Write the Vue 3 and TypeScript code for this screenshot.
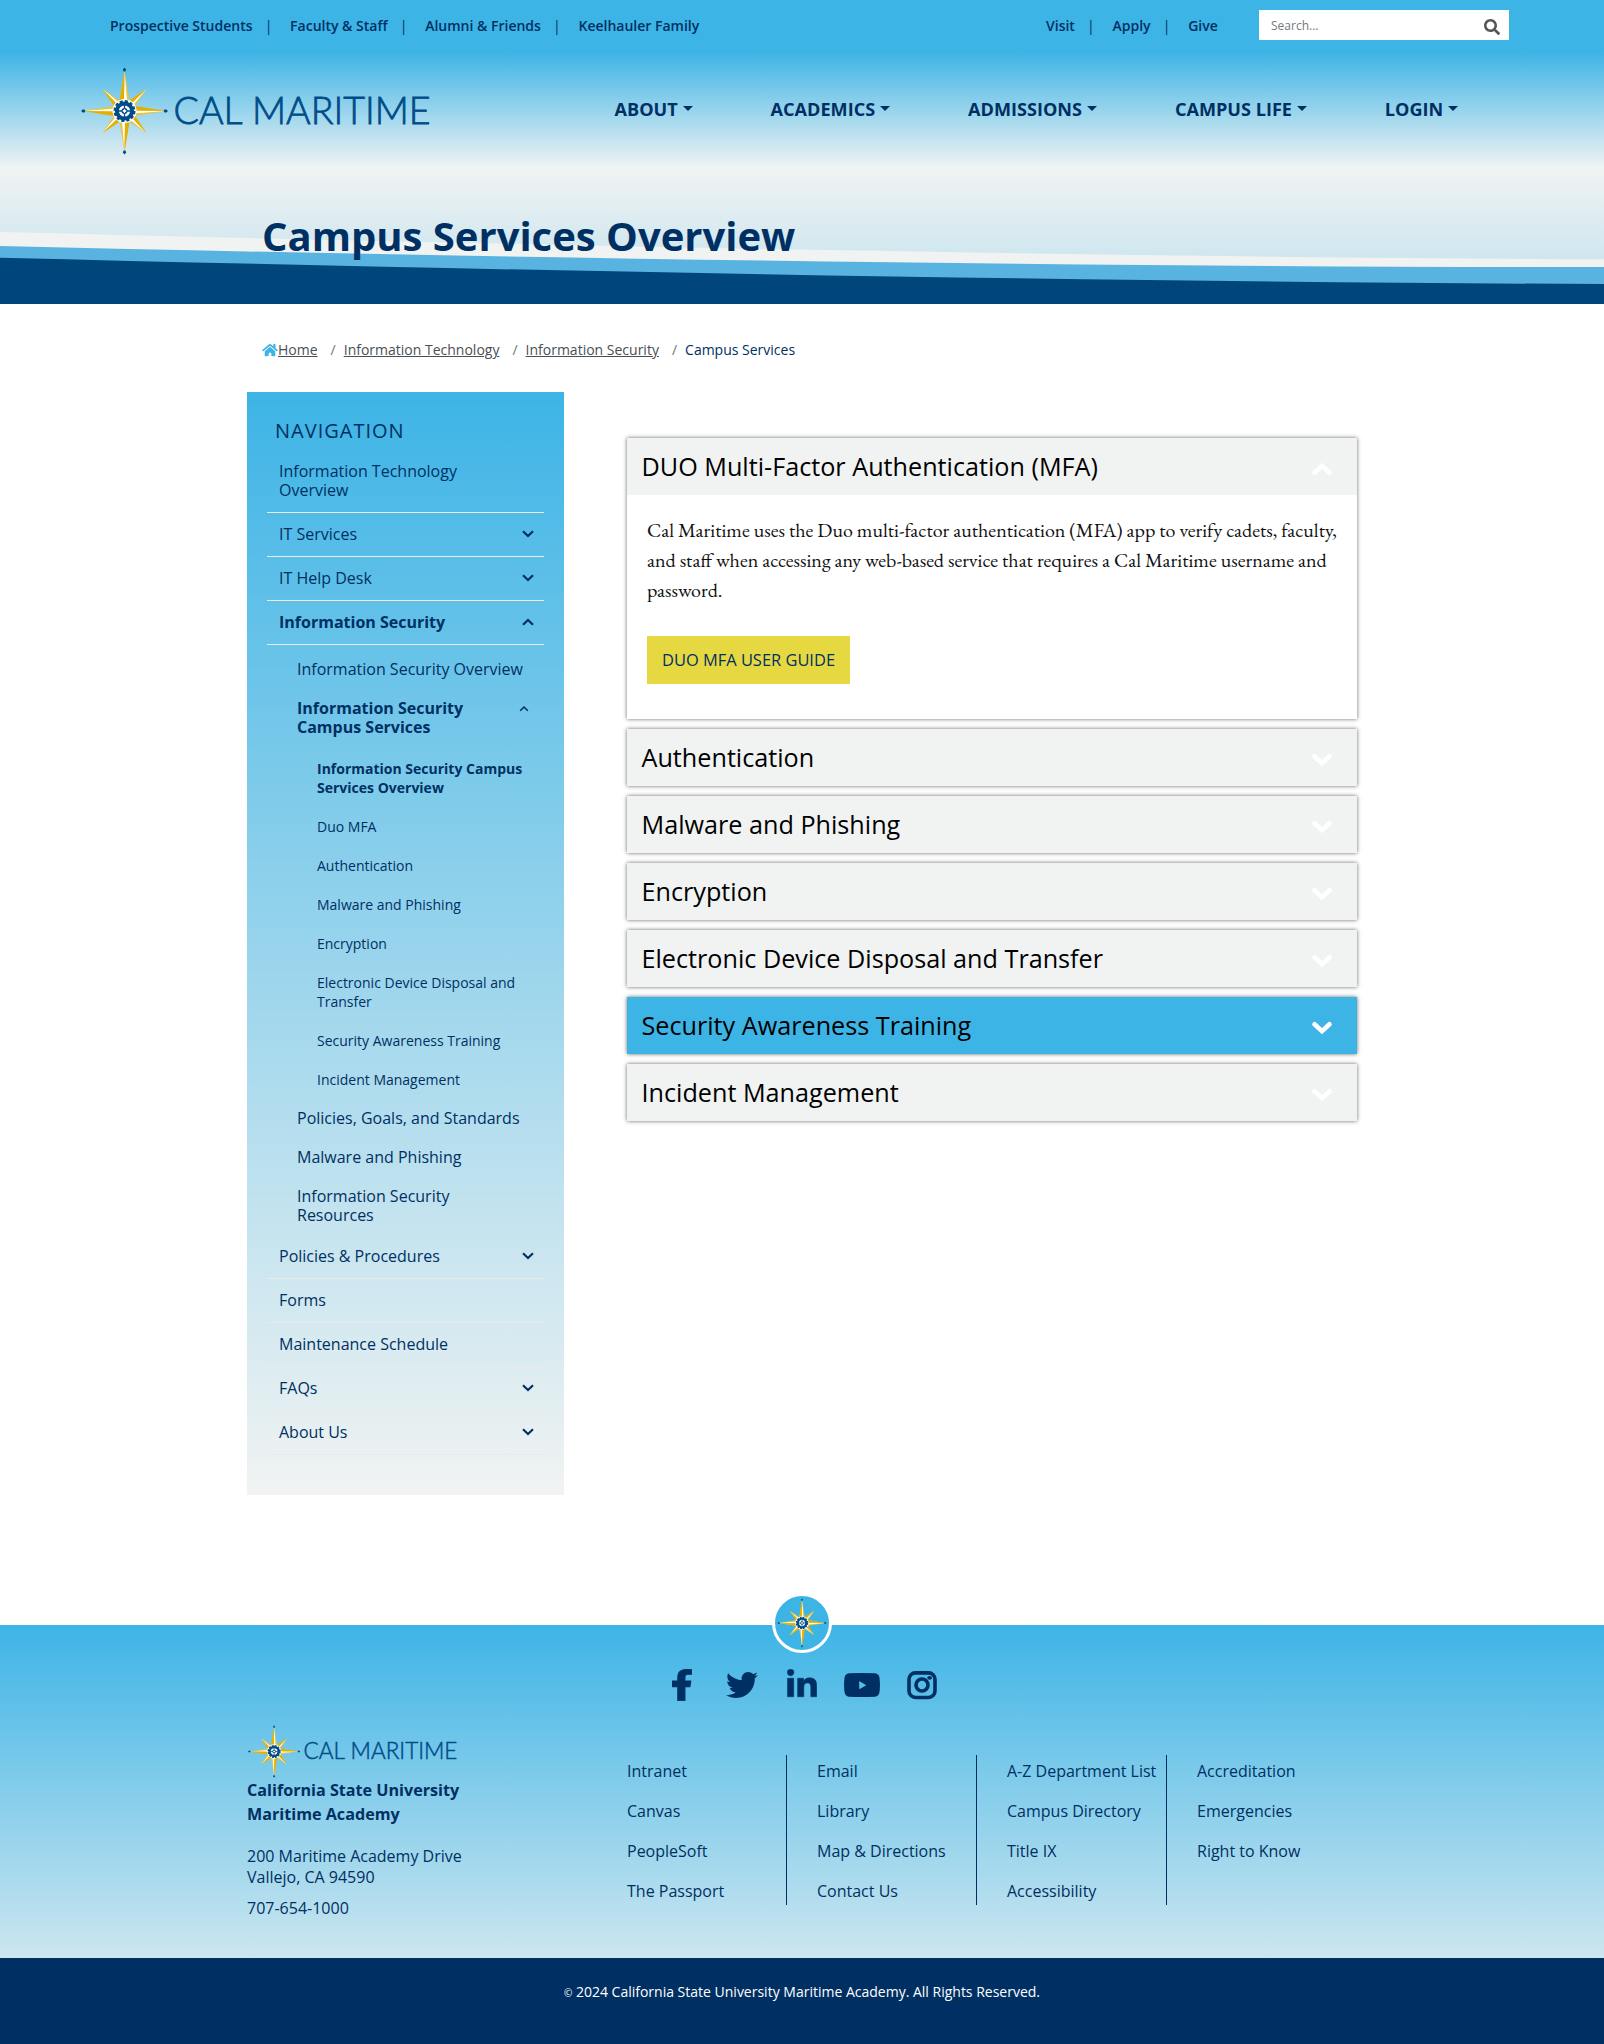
<script setup lang="ts">
import { defineComponent, h } from 'vue'

interface NavLeaf { lines: string[]; bold?: boolean }
interface NavSub extends NavLeaf { children?: NavLeaf[] }
interface NavItem { lines: string[]; bold?: boolean; chevron?: 'up' | 'down'; children?: NavSub[] }

const audienceLinks = ['Prospective Students', 'Faculty & Staff', 'Alumni & Friends', 'Keelhauler Family']
const actionLinks = ['Visit', 'Apply', 'Give']
const mainMenu = ['About', 'Academics', 'Admissions', 'Campus Life', 'Login']

const navItems: NavItem[] = [
  { lines: ['Information Technology', 'Overview'] },
  { lines: ['IT Services'], chevron: 'down' },
  { lines: ['IT Help Desk'], chevron: 'down' },
  {
    lines: ['Information Security'],
    bold: true,
    chevron: 'up',
    children: [
      { lines: ['Information Security Overview'] },
      {
        lines: ['Information Security', 'Campus Services'],
        bold: true,
        children: [
          { lines: ['Information Security Campus', 'Services Overview'], bold: true },
          { lines: ['Duo MFA'] },
          { lines: ['Authentication'] },
          { lines: ['Malware and Phishing'] },
          { lines: ['Encryption'] },
          { lines: ['Electronic Device Disposal and', 'Transfer'] },
          { lines: ['Security Awareness Training'] },
          { lines: ['Incident Management'] },
        ],
      },
      { lines: ['Policies, Goals, and Standards'] },
      { lines: ['Malware and Phishing'] },
      { lines: ['Information Security', 'Resources'] },
    ],
  },
  { lines: ['Policies & Procedures'], chevron: 'down' },
  { lines: ['Forms'] },
  { lines: ['Maintenance Schedule'] },
  { lines: ['FAQs'], chevron: 'down' },
  { lines: ['About Us'], chevron: 'down' },
]

const closedPanels = [
  { title: 'Authentication' },
  { title: 'Malware and Phishing' },
  { title: 'Encryption' },
  { title: 'Electronic Device Disposal and Transfer' },
  { title: 'Security Awareness Training', active: true },
  { title: 'Incident Management' },
]

const footerColumns = [
  ['Intranet', 'Canvas', 'PeopleSoft', 'The Passport'],
  ['Email', 'Library', 'Map & Directions', 'Contact Us'],
  ['A-Z Department List', 'Campus Directory', 'Title IX', 'Accessibility'],
  ['Accreditation', 'Emergencies', 'Right to Know'],
]

// Compass rose with a gear hub, drawn around the origin.
const CompassRose = defineComponent({
  name: 'CompassRose',
  setup() {
    const ray = (angle: number, length: number, half: number) =>
      h('g', { transform: `rotate(${angle})` }, [
        h('path', { d: `M0 ${-length}L${-half} -9L${half} -9Z`, fill: '#e6c340' }),
        h('path', { d: `M0 ${-length}L${-half * 0.1} -9L${half * 0.5} -9Z`, fill: '#fff' }),
        h('path', { d: `M0 ${-length}L${-half} -9L${-half * 0.1} -9Z`, fill: '#e2b100' }),
      ])
    return () =>
      h('g', null, [
        ...[45, 135, 225, 315].map((a) => ray(a, 31, 4.4)),
        ...[0, 90, 180, 270].map((a) => ray(a, 41, 5.2)),
        ...[0, 90, 180, 270].map((a) =>
          h('path', { d: 'M0 -43.6L1.7 -41.4L.9 -39.4H-.9L-1.7 -41.4Z', fill: '#004c88', transform: `rotate(${a})` })),
        h('circle', { r: 12, fill: '#fff' }),
        h('circle', { r: 9.6, fill: '#004c88' }),
        h('circle', { r: 9.8, fill: 'none', stroke: '#004c88', 'stroke-width': 2.4, 'stroke-dasharray': '3.1 2.031' }),
        h('circle', { r: 4.3, fill: 'none', stroke: '#fff', 'stroke-width': 2.6 }),
        h('path', { d: 'M0 -6V6M-6 0H6', stroke: '#004c88', 'stroke-width': 1.3 }),
        h('path', { d: 'M0 -2.2L.9 -.9L2.2 0L.9 .9L0 2.2L-.9 .9L-2.2 0L-.9 -.9Z', fill: '#fff' }),
      ])
  },
})
</script>

<template>
  <div class="page">
    <header class="site-header">
      <svg class="waves" viewBox="0 0 1604 304" aria-hidden="true">
        <path d="M0 232Q1000 257 1604 259.300V304H0Z" fill="#f1f3f2" />
        <path d="M0 246Q900 267 1604 267V304H0Z" fill="#58b3e0" />
        <path d="M0 257.700Q950 281.500 1604 284V304H0Z" fill="#00457b" />
      </svg>

      <div class="utility">
        <div class="utility-links">
          <template v-for="(link, i) in audienceLinks" :key="link">
            <span v-if="i" class="pipe">|</span><a>{{ link }}</a>
          </template>
        </div>
        <div class="utility-links actions">
          <template v-for="(link, i) in actionLinks" :key="link">
            <span v-if="i" class="pipe">|</span><a>{{ link }}</a>
          </template>
        </div>
        <div class="search">
          <span>Search...</span>
          <svg width="16" height="16" viewBox="0 0 512 512"><path fill="#555" d="M505 442.700L405.300 343c-4.500-4.500-10.600-7-17-7H372c27.600-35.300 44-79.700 44-128C416 93.100 322.900 0 208 0S0 93.100 0 208s93.100 208 208 208c48.300 0 92.700-16.400 128-44v16.300c0 6.400 2.500 12.500 7 17l99.700 99.700c9.400 9.400 24.600 9.400 33.900 0l28.300-28.300c9.400-9.400 9.400-24.600.1-34zM208 336c-70.700 0-128-57.200-128-128 0-70.700 57.200-128 128-128 70.700 0 128 57.200 128 128 0 70.700-57.200 128-128 128z" /></svg>
        </div>
      </div>

      <div class="brand-row">
        <svg class="logo" width="370" height="88" viewBox="0 0 370 88">
          <g transform="translate(43.500 44)"><CompassRose /></g>
          <text x="92.500" y="57.300" font-size="37.500" textLength="69" lengthAdjust="spacingAndGlyphs">CAL</text>
          <text x="171" y="57.300" font-size="37.500" textLength="178.500" lengthAdjust="spacingAndGlyphs">MARITIME</text>
        </svg>
        <nav class="main-menu">
          <a v-for="item in mainMenu" :key="item">{{ item }}<i class="caret"></i></a>
        </nav>
      </div>

      <h1>Campus Services Overview</h1>
    </header>

    <div class="breadcrumb">
      <svg width="16" height="14" viewBox="0 0 576 512"><path fill="#3db4e6" d="M280.370 148.260L96 300.110V464a16 16 0 0 0 16 16l112.060-.29a16 16 0 0 0 15.920-16V368a16 16 0 0 1 16-16h64a16 16 0 0 1 16 16v95.640a16 16 0 0 0 16 16.050L464 480a16 16 0 0 0 16-16V300L295.670 148.260a12.190 12.190 0 0 0-15.300 0zM571.600 251.470L488 182.560V44.050a12 12 0 0 0-12-12h-56a12 12 0 0 0-12 12v72.610L318.470 43a48 48 0 0 0-61 0L4.340 251.470a12 12 0 0 0-1.600 16.900l25.500 31A12 12 0 0 0 45.150 301l235.220-193.740a12.190 12.190 0 0 1 15.300 0L530.900 301a12 12 0 0 0 16.900-1.600l25.500-31a12 12 0 0 0-1.700-16.930z" /></svg>
      <a>Home</a><span class="slash">/</span>
      <a>Information Technology</a><span class="slash">/</span>
      <a>Information Security</a><span class="slash">/</span>
      <span class="current">Campus Services</span>
    </div>

    <main class="content">
      <aside class="sidebar">
        <h2>NAVIGATION</h2>
        <ul class="level1">
          <li v-for="item in navItems" :key="item.lines[0]">
            <div class="row" :class="{ bold: item.bold }">
              <span><template v-for="(line, i) in item.lines" :key="line"><br v-if="i">{{ line }}</template></span>
              <svg v-if="item.chevron" class="chev" :class="item.chevron" width="12" height="8" viewBox="0 0 12 8"><path d="M1 1.300L6 6L11 1.300" /></svg>
            </div>
            <ul v-if="item.children" class="level2">
              <li v-for="sub in item.children" :key="sub.lines[0]">
                <div class="subrow" :class="{ bold: sub.bold }">
                  <span><template v-for="(line, i) in sub.lines" :key="line"><br v-if="i">{{ line }}</template></span>
                  <svg v-if="sub.children" class="chev up small" width="10" height="7" viewBox="0 0 10 7"><path d="M1.200 1.300L5 5L8.800 1.300" /></svg>
                </div>
                <ul v-if="sub.children" class="level3">
                  <li v-for="leaf in sub.children" :key="leaf.lines[0]" :class="{ bold: leaf.bold }">
                    <template v-for="(line, i) in leaf.lines" :key="line"><br v-if="i">{{ line }}</template>
                  </li>
                </ul>
              </li>
            </ul>
          </li>
        </ul>
      </aside>

      <section class="accordion">
        <article class="panel">
          <div class="panel-head">
            <span>DUO Multi-Factor Authentication (MFA)</span>
            <svg class="chev panel-chev up" width="22" height="14" viewBox="0 0 22 14"><path d="M3.500 3.300L11 10.200L18.500 3.300" /></svg>
          </div>
          <div class="panel-body">
            <p>Cal Maritime uses the Duo multi-factor authentication (MFA) app to verify cadets, faculty,<br>and staff when accessing any web-based service that requires a Cal Maritime username and<br>password.</p>
            <a class="button">DUO MFA USER GUIDE</a>
          </div>
        </article>
        <article v-for="panel in closedPanels" :key="panel.title" class="panel">
          <div class="panel-head" :class="{ active: panel.active }">
            <span>{{ panel.title }}</span>
            <svg class="chev panel-chev" width="22" height="14" viewBox="0 0 22 14"><path d="M3.500 3.300L11 10.200L18.500 3.300" /></svg>
          </div>
        </article>
      </section>
    </main>

    <footer class="site-footer">
      <div class="badge">
        <svg width="54" height="54" viewBox="-48 -48 96 96"><CompassRose /></svg>
      </div>
      <div class="social">
        <span><svg width="20" height="32" viewBox="0 0 264 512" preserveAspectRatio="none"><path stroke="#003063" stroke-width="14" d="M76.700 505V283H7v-91h69.700v-71.700C76.700 42.400 124.300 7 193.800 7c33.300 0 53.900 1 62.200 2.100V85h-40.200c-37.800 0-45.100 18-45.100 44.300V192H248l-11.700 91h-65.600v222z" /></svg></span>
        <span><svg width="32" height="32" viewBox="0 0 512 512"><path d="M459.370 151.716c.325 4.548.325 9.097.325 13.645 0 138.720-105.583 298.558-298.558 298.558-59.452 0-114.680-17.219-161.137-47.106 8.447.974 16.568 1.299 25.340 1.299 49.055 0 94.213-16.568 130.274-44.832-46.132-.975-84.792-31.188-98.112-72.772 6.498.974 12.995 1.624 19.818 1.624 9.421 0 18.843-1.300 27.614-3.573-48.081-9.747-84.143-51.980-84.143-102.985v-1.299c13.969 7.797 30.214 12.670 47.431 13.319-28.264-18.843-46.781-51.005-46.781-87.391 0-19.492 5.197-37.360 14.294-52.954 51.655 63.675 129.300 105.258 216.365 109.807-1.624-7.797-2.599-15.918-2.599-24.040 0-57.828 46.782-104.934 104.934-104.934 30.213 0 57.502 12.670 76.670 33.137 23.715-4.548 46.456-13.320 66.599-25.340-7.798 24.366-24.366 44.833-46.132 57.827 21.117-2.273 41.584-8.122 60.426-16.243-14.292 20.791-32.161 39.308-52.628 54.253z" /></svg></span>
        <span><svg width="30" height="32" viewBox="0 0 448 512" preserveAspectRatio="none"><path stroke="#003063" stroke-width="8" d="M100.280 444H7.400V148.900h92.880zM53.790 108.100C24.090 108.100 4 83.500 4 53.800a49.790 49.790 0 0 1 99.580 0c0 29.700-20.100 54.300-49.790 54.300zM443.900 444h-88.680V302.400c0-34.700-.7-79.200-48.290-79.200-48.290 0-55.690 37.700-55.690 76.700V444h-92.780V148.900h89.080v40.800h1.300c12.400-23.500 42.690-48.300 87.880-48.300 90 0 107.280 61.900 107.280 142.300V444z" /></svg></span>
        <span><svg width="36" height="32" viewBox="0 0 36 32"><path fill-rule="evenodd" d="M5 4.300Q18 3.700 31 4.300Q35 4.800 35.500 9Q36.400 16 35.500 23Q35 27.200 31 27.700Q18 28.300 5 27.700Q1 27.200 .5 23Q-.4 16 .5 9Q1 4.800 5 4.300ZM15.200 12V20.300L22.300 16.200Z" /></svg></span>
        <span><svg width="30" height="32" viewBox="0 0 30 32" fill="none"><rect x="2" y="3.900" width="26" height="24.600" rx="6.500" stroke="#003063" stroke-width="3.600" /><circle cx="15" cy="16" r="6" stroke="#003063" stroke-width="3.600" /><ellipse cx="22.600" cy="8.800" rx="2.400" ry="1.900" fill="#003063" /></svg></span>
      </div>

      <div class="footer-main">
        <div class="address">
          <svg class="logo" width="222" height="53" viewBox="0 0 370 88">
            <g transform="translate(43.500 44)"><CompassRose /></g>
            <text x="92.500" y="57.300" font-size="37.500" textLength="69" lengthAdjust="spacingAndGlyphs">CAL</text>
            <text x="171" y="57.300" font-size="37.500" textLength="178" lengthAdjust="spacingAndGlyphs">MARITIME</text>
          </svg>
          <strong>California State University<br>Maritime Academy</strong>
          <p>200 Maritime Academy Drive<br>Vallejo, CA 94590</p>
          <p class="phone">707-654-1000</p>
        </div>
        <div class="link-columns">
          <ul v-for="(column, i) in footerColumns" :key="i">
            <li v-for="link in column" :key="link">{{ link }}</li>
          </ul>
        </div>
      </div>

      <div class="copyright"><small>©</small> 2024 California State University Maritime Academy. All Rights Reserved.</div>
    </footer>
  </div>
</template>

<style>
body { margin: 0; background: #fff; }
</style>

<style scoped>
.page {
  width: 1604px;
  height: 2044px;
  display: flex;
  flex-direction: column;
  font-family: "Open Sans", "Noto Sans", sans-serif;
  font-size: 16px;
  color: #003063;
}
.page * { box-sizing: border-box; }
ul { list-style: none; margin: 0; padding: 0; }

.site-header {
  position: relative;
  height: 304px;
  flex: none;
  background: linear-gradient(180deg, #3db4e6 0, #3db4e6 52px, #f0f3f3 168px, #cde6ef 264px);
}
.waves { position: absolute; inset: 0; width: 1604px; height: 304px; }

.utility {
  position: relative;
  display: flex;
  align-items: center;
  height: 30px;
  padding: 10px 0 0 110px;
  box-sizing: content-box;
}
.utility-links {
  display: flex;
  width: 936px;
  font-size: 14px;
  font-weight: 600;
  line-height: 20px;
  padding-top: 1px;
  white-space: nowrap;
}
.utility-links.actions { width: 213px; }
.pipe { margin: 0 17.700px 0 12.200px; font-weight: 400; }
.search {
  display: flex;
  align-items: center;
  justify-content: space-between;
  width: 250px;
  height: 30px;
  padding: 0 9px 0 12px;
  background: #fff;
  color: #75797d;
  font-size: 12px;
}
.search svg { margin-top: 3px; }

.brand-row {
  position: relative;
  display: flex;
  align-items: center;
  height: 88px;
  margin-top: 26.500px;
  padding-left: 80.500px;
}
.logo { display: block; flex: none; }
.logo text {
  font-family: Lato, "Open Sans", sans-serif;
  font-weight: 300;
  fill: #004c88;
  stroke: #004c88;
  stroke-width: .8px;
}
.main-menu {
  display: flex;
  gap: 78.100px;
  margin-left: 164px;
  font-size: 18.100px;
  font-weight: 700;
  line-height: 24px;
  text-transform: uppercase;
  white-space: nowrap;
  padding-bottom: 4px;
}
.caret {
  display: inline-block;
  margin-left: 4.800px;
  vertical-align: 4.600px;
  border: 5.400px solid transparent;
  border-top-color: #003063;
  border-bottom: 0;
}
h1 {
  position: relative;
  margin: 53px 0 0 262px;
  font-size: 40px;
  font-weight: 700;
  line-height: 56px;
}

.breadcrumb {
  display: flex;
  align-items: center;
  height: 20px;
  margin: 36px 0 0 262px;
  font-size: 14px;
  line-height: 20px;
  color: #6c757d;
  white-space: nowrap;
}
.breadcrumb a { color: #4a4f55; text-decoration: underline; }
.slash { margin: 0 8px 0 13px; }
.current { color: #003063; }

.content { display: flex; margin: 32px 0 0 247px; align-items: flex-start; }
.sidebar {
  width: 317px;
  height: 1103px;
  padding: 25px 20px 0;
  background: linear-gradient(180deg, #3db4e6, #f1f3f2);
}
.sidebar h2 {
  margin: 0 0 12px;
  padding-left: 8px;
  font-size: 20px;
  font-weight: 400;
  letter-spacing: 1px;
  line-height: 28px;
}
.row {
  display: flex;
  justify-content: space-between;
  min-height: 44px;
  padding: 12px 10px 12px 12px;
  border-bottom: 1px solid #eceae6;
  line-height: 19px;
}
.level1 > li:first-child .row { height: 56px; padding-top: 5px; }
.bold { font-weight: 700; }
.chev { flex: none; fill: none; stroke: #003063; stroke-width: 2.200; }
.chev.up { transform: rotate(180deg); }
.row .chev { margin-top: 5px; }
.level2 { padding: 5px 0 0 30px; }
.subrow {
  display: flex;
  justify-content: space-between;
  padding: 10px 15px 10px 0;
  line-height: 19px;
  white-space: nowrap;
}
.small { margin-top: 6px; stroke-width: 1.600; }
.level3 { padding: 2px 0 0 20px; font-size: 14px; line-height: 19px; }
.level3 li { padding: 10px 0; white-space: nowrap; }

.accordion { display: flex; flex-direction: column; gap: 10px; width: 730px; margin: 46px 0 0 63px; }
.panel { box-shadow: 0 0 4px rgba(0, 0, 0, .6); background: #fff; }
.panel-head {
  display: flex;
  align-items: center;
  justify-content: space-between;
  height: 57px;
  padding: 0 24px 0 14.500px;
  background: #f1f3f2;
  color: #000;
  font-size: 25.200px;
}
.panel-head span { padding-bottom: 2px; }
.panel-head.active { background: #3db4e6; }
.panel-chev { stroke: #fff; stroke-width: 4.600; stroke-linecap: round; margin-top: 5px; }
.panel-body { height: 224px; padding: 20px 20px 0; }
.panel-body p {
  margin: 0 0 31px;
  color: #111;
  font-family: "EB Garamond", "Liberation Serif", serif;
  font-size: 20px;
  line-height: 30px;
  white-space: nowrap;
}
.button {
  display: inline-flex;
  align-items: center;
  justify-content: center;
  width: 203px;
  height: 48px;
  padding-bottom: 1px;
  background: #e6d840;
  font-size: 16.450px;
  white-space: nowrap;
}

.site-footer {
  position: relative;
  display: flex;
  flex-direction: column;
  height: 419px;
  margin-top: auto;
  background: linear-gradient(180deg, #3db4e6, #f1f3f2);
}
.badge {
  position: absolute;
  left: 772px;
  top: -32px;
  width: 60px;
  height: 60px;
  border: 3px solid #fff;
  border-radius: 50%;
  background: #3db4e6;
}
.badge svg { display: block; }
.social { display: flex; justify-content: center; padding-top: 44px; }
.social span { display: flex; justify-content: center; width: 60px; height: 32px; }
.social svg { fill: #003063; }
.social span:last-child svg { fill: none; }
.footer-main { display: flex; padding-left: 247px; margin-top: 23px; }
.address { width: 380px; line-height: 24px; }
.address .logo { margin: 1px 0 0 1px; }
.address strong { display: block; font-size: 16.150px; }
.address p { margin: 20px 0 0; line-height: 21px; }
.address p.phone { margin-top: 10px; }
.link-columns { display: flex; gap: 30px; padding-top: 31px; }
.link-columns ul {
  width: 160px;
  height: 150px;
  padding-top: 4px;
  border-right: 1px solid #003063;
  line-height: 24px;
  white-space: nowrap;
}
.link-columns ul:last-child { border: 0; }
.link-columns li { margin-bottom: 16px; }
.copyright {
  height: 86px;
  margin-top: auto;
  padding-top: 23px;
  background: #003063;
  color: #fff;
  font-size: 14px;
  line-height: 22px;
  text-align: center;
}
.copyright small { font-size: 10px; }
</style>
